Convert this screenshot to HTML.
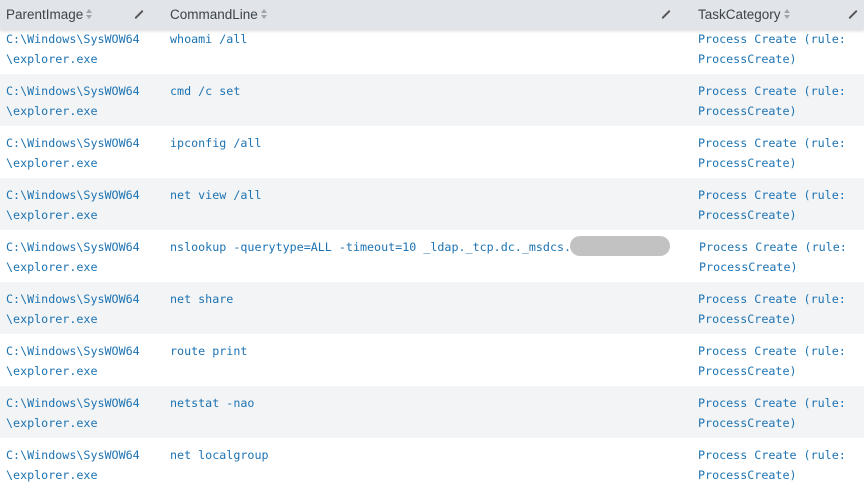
<!DOCTYPE html><html><head><style>
body{margin:0;width:864px;height:487px;overflow:hidden;background:#fff;position:relative;font-family:"DejaVu Sans Mono","Liberation Mono",monospace}
.row{position:absolute;left:0;width:864px;height:52px}
.g{background:#f2f4f5}
.t{position:absolute;font-size:11.7px;line-height:20px;color:#1d73b3;white-space:pre;margin-top:1px}
.hdr{position:absolute;left:0;top:0;width:864px;height:30px;background:#e1e4e8;box-shadow:0 1px 3px rgba(0,0,0,.15);font-family:"Liberation Sans","DejaVu Sans",sans-serif;font-size:13.5px;color:#3c444d}
.hdr span{position:absolute;top:7px}
.s{display:inline-block;position:relative;width:7px;height:12px;vertical-align:-1px;margin-left:3px}
.s:before{content:"";position:absolute;left:0;top:1px;border-left:3.5px solid transparent;border-right:3.5px solid transparent;border-bottom:4px solid #a0a6ad}
.s:after{content:"";position:absolute;left:0;top:7px;border-left:3.5px solid transparent;border-right:3.5px solid transparent;border-top:4px solid #a0a6ad}
.p{position:absolute;top:9px;width:2px;height:11px;background:#555;transform:rotate(45deg);border-radius:1px}
</style></head><body>
<div class="row" style="top:22px"></div>
<div class="row g" style="top:74px"></div>
<div class="row" style="top:126px"></div>
<div class="row g" style="top:178px"></div>
<div class="row" style="top:230px"></div>
<div class="row g" style="top:282px"></div>
<div class="row" style="top:334px"></div>
<div class="row g" style="top:386px"></div>
<div class="row" style="top:438px"></div>

<div class="t" style="left:6px;top:28px">C:\Windows\SysWOW64
\explorer.exe</div>
<div class="t" style="left:6px;top:80px">C:\Windows\SysWOW64
\explorer.exe</div>
<div class="t" style="left:6px;top:132px">C:\Windows\SysWOW64
\explorer.exe</div>
<div class="t" style="left:6px;top:184px">C:\Windows\SysWOW64
\explorer.exe</div>
<div class="t" style="left:6px;top:236px">C:\Windows\SysWOW64
\explorer.exe</div>
<div class="t" style="left:6px;top:288px">C:\Windows\SysWOW64
\explorer.exe</div>
<div class="t" style="left:6px;top:340px">C:\Windows\SysWOW64
\explorer.exe</div>
<div class="t" style="left:6px;top:392px">C:\Windows\SysWOW64
\explorer.exe</div>
<div class="t" style="left:6px;top:444px">C:\Windows\SysWOW64
\explorer.exe</div>

<div class="t" style="left:170px;top:28px">whoami /all</div>
<div class="t" style="left:170px;top:80px">cmd /c set</div>
<div class="t" style="left:170px;top:132px">ipconfig /all</div>
<div class="t" style="left:170px;top:184px">net view /all</div>
<div class="t" style="left:170px;top:236px">nslookup -querytype=ALL -timeout=10 _ldap._tcp.dc._msdcs.</div>
<div style="position:absolute;left:570px;top:236px;width:100px;height:20px;border-radius:10px;background:#c2c2c2"></div>
<div class="t" style="left:170px;top:288px">net share</div>
<div class="t" style="left:170px;top:340px">route print</div>
<div class="t" style="left:170px;top:392px">netstat -nao</div>
<div class="t" style="left:170px;top:444px">net localgroup</div>

<div class="t" style="left:698px;top:28px">Process Create (rule:
ProcessCreate)</div>
<div class="t" style="left:698px;top:80px">Process Create (rule:
ProcessCreate)</div>
<div class="t" style="left:698px;top:132px">Process Create (rule:
ProcessCreate)</div>
<div class="t" style="left:698px;top:184px">Process Create (rule:
ProcessCreate)</div>
<div class="t" style="left:699px;top:236px">Process Create (rule:
ProcessCreate)</div>
<div class="t" style="left:698px;top:288px">Process Create (rule:
ProcessCreate)</div>
<div class="t" style="left:698px;top:340px">Process Create (rule:
ProcessCreate)</div>
<div class="t" style="left:698px;top:392px">Process Create (rule:
ProcessCreate)</div>
<div class="t" style="left:698px;top:444px">Process Create (rule:
ProcessCreate)</div>

<div class="hdr">
<span style="left:6px">ParentImage<i class="s"></i></span>
<div class="p" style="left:138px"></div>
<span style="left:170px">CommandLine<i class="s"></i></span>
<div class="p" style="left:665px"></div>
<span style="left:698px">TaskCategory<i class="s"></i></span>
<div class="p" style="left:852px"></div>
</div>
</body></html>
